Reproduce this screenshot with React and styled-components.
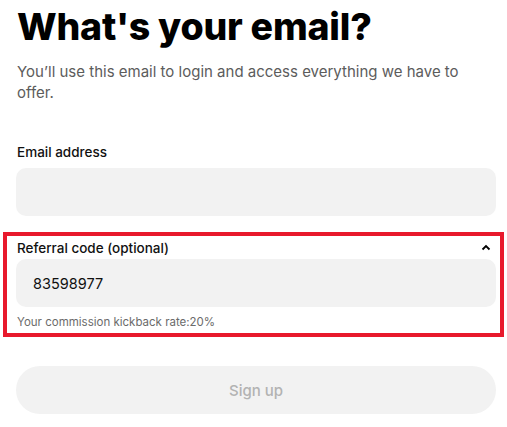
import React from "react"
import styled, { createGlobalStyle } from "styled-components"

const GlobalStyle = createGlobalStyle`
  html, body {
    margin: 0;
    padding: 0;
    background: #ffffff;
  }
  body {
    font-family: Inter, "Liberation Sans", sans-serif;
    color: #000000;
  }
`

const Page = styled.div`
  padding: 3px 11px 0 16px;
  display: flex;
  flex-direction: column;
`

const Title = styled.h1`
  margin: 0;
  font-size: 37.5px;
  line-height: 48px;
  font-weight: 800;
  letter-spacing: -0.2px;
  padding-left: 1px;
`

const Subtitle = styled.p`
  margin: 10px 0 0;
  padding-left: 1px;
  font-size: 15px;
  line-height: 21px;
  color: #5c5c5c;
  max-width: 460px;
`

const Field = styled.div`
  display: flex;
  flex-direction: column;
  margin-top: ${(p) => p.$top || 0}px;
`

const LabelRow = styled.div`
  display: flex;
  align-items: center;
  justify-content: space-between;
  height: 20px;
  margin-bottom: ${(p) => p.$gap}px;
`

const Label = styled.label`
  font-size: 13.5px;
  font-weight: 500;
  padding-left: 1px;
  color: #111111;
`

const Input = styled.div`
  height: 48px;
  border-radius: 10px;
  background: #f2f2f2;
  display: flex;
  align-items: center;
  padding: 0 17px;
  font-size: 14.5px;
  color: #111111;
`

const Highlight = styled.div`
  margin: 16px -8px 0 -13px;
  border: 4px solid #e8192c;
  padding: 2px 4px 3px 9px;
`

const Hint = styled.div`
  margin-top: 7px;
  font-size: 11.5px;
  line-height: 16px;
  color: #6b6b6b;
  padding-left: 1px;
`

const Chevron = styled.svg`
  width: 10px;
  height: 10px;
  margin-right: 5px;
`

const Button = styled.button`
  margin-top: 29px;
  height: 48px;
  border: none;
  border-radius: 24px;
  background: #f2f2f2;
  color: #b3b3b3;
  font-family: inherit;
  font-size: 15px;
  font-weight: 500;
`

export default function App() {
  return (
    <Page>
      <GlobalStyle />
      <Title>What's your email?</Title>
      <Subtitle>
        You’ll use this email to login and access everything we have to offer.
      </Subtitle>
      <Field $top={39}>
        <LabelRow $gap={6}>
          <Label>Email address</Label>
        </LabelRow>
        <Input />
      </Field>
      <Highlight>
        <Field>
          <LabelRow $gap={1}>
            <Label>Referral code (optional)</Label>
            <Chevron viewBox="0 0 10 10">
              <path d="M1.5 6.5 L5 3 L8.5 6.5" fill="none" stroke="#000" strokeWidth="1.8" />
            </Chevron>
          </LabelRow>
          <Input>83598977</Input>
        </Field>
        <Hint>Your commission kickback rate:20%</Hint>
      </Highlight>
      <Button>Sign up</Button>
    </Page>
  )
}
